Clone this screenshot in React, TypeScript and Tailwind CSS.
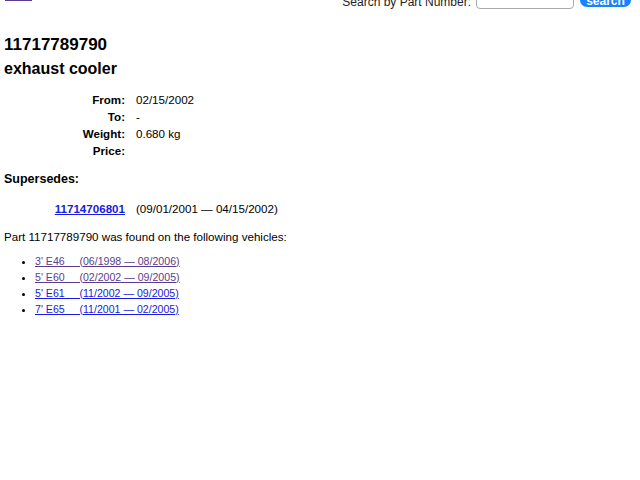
const VEHICLES = [
  { name: "3' E46", range: "(06/1998 — 08/2006)", visited: true },
  { name: "5' E60", range: "(02/2002 — 09/2005)", visited: true },
  { name: "5' E61", range: "(11/2002 — 09/2005)", visited: false },
  { name: "7' E65", range: "(11/2001 — 02/2005)", visited: false },
];

const DETAILS = [
  { label: "From:", value: "02/15/2002" },
  { label: "To:", value: "-" },
  { label: "Weight:", value: "0.680 kg" },
  { label: "Price:", value: "" },
];

export default function App() {
  return (
    <div className="min-h-[480px] bg-white font-['Liberation_Sans',Arial,sans-serif] text-black">
      {/* header, scrolled partly out of view */}
      <header className="-mt-[20px] flex h-[29px] items-end justify-between pl-[5px] pr-[9px]">
        <div className="mb-[8px] h-[10px] w-[27px] border-b-2 border-[#5b3d8f]" />
        <div className="flex items-end gap-[5px]">
          <span className="mb-[0px] text-[12px] leading-[14px] text-[#222]">Search by Part Number:</span>
          <input
            className="h-[20px] w-[98px] rounded-[4px] border border-[#a9a9a9] bg-white"
            aria-label="part number"
          />
          <button className="ml-[1px] mb-[2px] flex h-[19px] w-[51px] items-end justify-center rounded-[7px] bg-[#1a82fb] pb-[1px] text-[12px] leading-[10px] font-bold text-white">
            search
          </button>
        </div>
      </header>

      <main className="px-[4px]">
        <h1 className="mt-[26px] text-[17px] leading-[20px] font-bold">11717789790</h1>
        <h2 className="mt-[4px] text-[16px] leading-[20px] font-bold">exhaust cooler</h2>

        <div className="mt-[12px] grid grid-cols-[121px_auto] gap-x-[11px] text-[11.6px] leading-[17px]">
          {DETAILS.map((d) => (
            <div key={d.label} className="contents">
              <span className="text-right font-bold">{d.label}</span>
              <span>{d.value}</span>
            </div>
          ))}
        </div>

        <h3 className="mt-[12px] text-[12.5px] leading-[17px] font-bold">Supersedes:</h3>

        <div className="mt-[12px] grid grid-cols-[121px_auto] gap-x-[11px] text-[11.6px] leading-[17px]">
          <a href="#" className="text-right font-bold text-[#1a1ae0] underline">
            11714706801
          </a>
          <span>(09/01/2001 — 04/15/2002)</span>
        </div>

        <p className="mt-[11px] text-[11.6px] leading-[17px]">
          Part 11717789790 was found on the following vehicles:
        </p>

        <ul className="mt-[8px] list-disc pl-[31px] text-[10.6px] leading-[16px]">
          {VEHICLES.map((v) => (
            <li key={v.name}>
              <a
                href="#"
                className={
                  v.visited
                    ? "whitespace-pre text-[#5b3d8f] underline"
                    : "whitespace-pre text-[#1a1ae0] underline"
                }
              >
                {`${v.name}     ${v.range}`}
              </a>
            </li>
          ))}
        </ul>
      </main>
    </div>
  );
}
